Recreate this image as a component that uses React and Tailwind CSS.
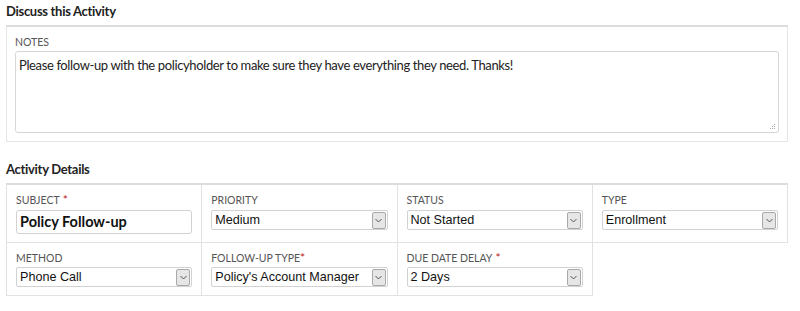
import React from "react";

const label = "text-[10.5px] uppercase text-[#555] leading-[14px] font-['Lato',sans-serif]";

function Chevron() {
  return (
    <span className="w-[14px] h-[17px] shrink-0 flex items-center justify-center bg-[#e6e6e6] border border-[#a9a9a9] rounded-[2px]">
      <svg width="7" height="5" viewBox="0 0 7 5" fill="none">
        <path d="M0.5 1 L3.5 4 L6.5 1" stroke="#555" strokeWidth="1" />
      </svg>
    </span>
  );
}

function Select({ value }) {
  return (
    <div className="h-[20px] w-full flex items-center justify-between border border-[#d2d2d2] rounded-[2px] pl-[3px] pr-[1px] bg-white">
      <span className="text-[12.6px] text-[#111] font-['Liberation_Sans',sans-serif] leading-none whitespace-nowrap">
        {value}
      </span>
      <Chevron />
    </div>
  );
}

function Field({ name, req, tight, gap = "mt-[3px]", children }) {
  return (
    <div className="border-r border-b border-[#e2e2e2] px-[9px] pt-[8px] pb-[8px]">
      <div className={label}>
        {name}
        {req && (
          <span className={`text-[#b22] text-[12px] ${tight ? "" : "ml-[3px]"}`}>*</span>
        )}
      </div>
      <div className={gap}>{children}</div>
    </div>
  );
}

export default function App() {
  return (
    <div className="w-[800px] h-[311px] bg-white px-[6px] pt-[3px] font-['Lato',sans-serif] text-[#222]">
      <h2 className="text-[13px] font-bold leading-[16px] tracking-[-0.3px] text-[#222]">Discuss this Activity</h2>
      <div className="mt-[6px] w-[782px] border border-[#e4e4e4] border-t-2 border-t-[#dcdcdc] px-[8px] pt-[8px] pb-[8px]">
        <div className={label}>Notes</div>
        <div className="mt-[2px] relative h-[82px] border border-[#d6d6d6] rounded-[3px] px-[3px] pt-[4px]">
          <p className="text-[13px] text-[#222] leading-[18px] tracking-[-0.37px]">
            Please follow-up with the policyholder to make sure they have everything they need. Thanks!
          </p>
          <svg className="absolute right-[2px] bottom-[2px]" width="7" height="7" viewBox="0 0 7 7">
            <g fill="#aaa">
              <rect x="5" y="1" width="1" height="1" />
              <rect x="3" y="3" width="1" height="1" />
              <rect x="5" y="3" width="1" height="1" />
              <rect x="1" y="5" width="1" height="1" />
              <rect x="3" y="5" width="1" height="1" />
              <rect x="5" y="5" width="1" height="1" />
            </g>
          </svg>
        </div>
      </div>

      <h2 className="mt-[19px] text-[13px] font-bold leading-[16px] tracking-[-0.3px] text-[#222]">Activity Details</h2>
      <div className="mt-[6px] w-[782px] grid grid-cols-4 border-l border-t-2 border-[#e2e2e2] border-t-[#dcdcdc]">
        <Field name="Subject" req>
          <div className="h-[24px] flex items-center border border-[#d2d2d2] rounded-[3px] px-[3px]">
            <span className="text-[14.5px] font-bold text-[#111] font-['Lato',sans-serif] leading-none">
              Policy Follow-up
            </span>
          </div>
        </Field>
        <Field name="Priority">
          <Select value="Medium" />
        </Field>
        <Field name="Status">
          <Select value="Not Started" />
        </Field>
        <Field name="Type">
          <Select value="Enrollment" />
        </Field>
        <Field name="Method" gap="mt-[2px]">
          <Select value="Phone Call" />
        </Field>
        <Field name="Follow-up Type" req tight gap="mt-[2px]">
          <Select value="Policy's Account Manager" />
        </Field>
        <Field name="Due Date Delay" req gap="mt-[2px]">
          <Select value="2 Days" />
        </Field>
      </div>
    </div>
  );
}
